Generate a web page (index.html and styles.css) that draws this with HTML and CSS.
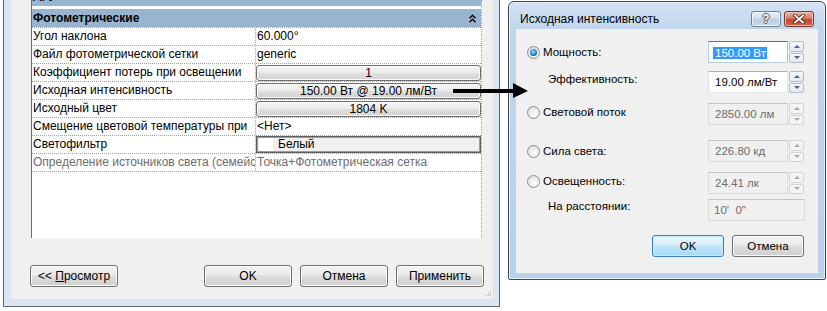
FILE: index.html
```html
<!DOCTYPE html>
<html lang="ru">
<head>
<meta charset="utf-8">
<title>Исходная интенсивность</title>
<link rel="stylesheet" href="styles.css">
</head>
<body>
<div class="desk">
  <div class="win">
    <div class="client">
      <div class="grid">
        <div class="cat cat-cut"><span>Другие</span></div>
        <div class="cat"><span>Фотометрические</span>
          <svg class="chev" width="7" height="9" viewBox="0 0 7 9"><polyline points="0.5,4.2 3.5,1.2 6.5,4.2" fill="none" stroke="#000" stroke-width="1.4"/><polyline points="0.5,8.2 3.5,5.2 6.5,8.2" fill="none" stroke="#000" stroke-width="1.4"/></svg>
        </div>
        <div class="row"><div class="k">Угол наклона</div><div class="v">60.000°</div></div>
        <div class="row"><div class="k">Файл фотометрической сетки</div><div class="v">generic</div></div>
        <div class="row"><div class="k">Коэффициент потерь при освещении</div><div class="v"><div class="vbtn">1</div></div></div>
        <div class="row"><div class="k">Исходная интенсивность</div><div class="v"><div class="vbtn">150.00 Вт @ 19.00 лм/Вт</div></div></div>
        <div class="row"><div class="k">Исходный цвет</div><div class="v"><div class="vbtn">1804 K</div></div></div>
        <div class="row"><div class="k">Смещение цветовой температуры при</div><div class="v">&lt;Нет&gt;</div></div>
        <div class="row"><div class="k">Светофильтр</div><div class="v"><div class="swatchbox"><span class="swatch"></span><span>Белый</span></div></div></div>
        <div class="row dim"><div class="k">Определение источников света (семейс</div><div class="v">Точка+Фотометрическая сетка</div></div>
      </div>
      <div class="btnbar">
        <div class="btn">&lt;&lt; <u>П</u>росмотр</div>
        <div class="spacer"></div>
        <div class="btn">OK</div>
        <div class="btn">Отмена</div>
        <div class="btn">Применить</div>
      </div>
      <svg class="grip" width="6" height="6" viewBox="0 0 6 6" fill="#a9a9a9"><rect x="4" y="0" width="1" height="1"/><rect x="2" y="2" width="1" height="1"/><rect x="4" y="2" width="1" height="1"/><rect x="0" y="4" width="1" height="1"/><rect x="2" y="4" width="1" height="1"/><rect x="4" y="4" width="1" height="1"/></svg>
    </div>
  </div>

  <div class="dlg">
    <div class="title">
      <span class="ttext">Исходная интенсивность</span>
      <div class="capbtns">
        <div class="cap help"><span>?</span></div>
        <div class="cap close">
          <svg width="12" height="10" viewBox="0 0 12 10"><path d="M2 1.5 L10 8.5 M10 1.5 L2 8.5" stroke="#5a2a22" stroke-width="3.6" stroke-linecap="square"/><path d="M2 1.5 L10 8.5 M10 1.5 L2 8.5" stroke="#fff" stroke-width="1.8" stroke-linecap="square"/></svg>
        </div>
      </div>
    </div>
    <div class="dclient">
      <div class="drow r1">
        <div class="opt"><span class="radio on"></span><span>Мощность:</span></div>
        <div class="ctl"><div class="field focus"><span class="sel">150.00 Вт</span></div><div class="spin"><span class="sb"><i class="up"></i></span><span class="sb"><i class="dn"></i></span></div></div>
      </div>
      <div class="drow r2">
        <div class="opt ind lift3">Эффективность:</div>
        <div class="ctl"><div class="field">19.00 лм/Вт</div><div class="spin"><span class="sb"><i class="up"></i></span><span class="sb"><i class="dn"></i></span></div></div>
      </div>
      <div class="drow r3">
        <div class="opt lift2"><span class="radio"></span><span>Световой поток</span></div>
        <div class="ctl"><div class="field off">2850.00 лм</div><div class="spin off"><span class="sb"><i class="up"></i></span><span class="sb"><i class="dn"></i></span></div></div>
      </div>
      <div class="drow r4">
        <div class="opt"><span class="radio"></span><span>Сила света:</span></div>
        <div class="ctl"><div class="field off">226.80 кд</div><div class="spin off"><span class="sb"><i class="up"></i></span><span class="sb"><i class="dn"></i></span></div></div>
      </div>
      <div class="drow r5">
        <div class="opt lift2"><span class="radio"></span><span>Освещенность:</span></div>
        <div class="ctl"><div class="field off">24.41 лк</div><div class="spin off"><span class="sb"><i class="up"></i></span><span class="sb"><i class="dn"></i></span></div></div>
      </div>
      <div class="drow r6">
        <div class="opt ind lift4">На расстоянии:</div>
        <div class="ctl"><div class="field off wide">10'&nbsp; 0"</div></div>
      </div>
      <div class="dbtns">
        <div class="btn dbtn def">OK</div>
        <div class="btn dbtn">Отмена</div>
      </div>
    </div>
  </div>

  <svg class="arrow" width="78" height="18" viewBox="0 0 78 18"><rect x="1" y="7" width="62" height="4" fill="#000"/><polygon points="61,1 76,9 61,16" fill="#000"/></svg>
</div>
</body>
</html>
```
FILE: styles.css
```css
* { box-sizing: border-box; }
html, body { margin: 0; padding: 0; background: #fff; }
body {
  width: 827px;
  height: 311px;
  overflow: hidden;
  font-family: "Liberation Sans", Arial, sans-serif;
  font-size: 12px;
  color: #000;
}
.desk {
  position: relative;
  display: flex;
  align-items: flex-start;
  padding-left: 3px;
  height: 311px;
}

/* ---------- left properties window ---------- */
.win {
  width: 497px;
  height: 307px;
  border: 1px solid #646464;
  border-top: 0;
  background: #dbe5f1;
  padding: 0 6px 7px 7px;
  flex: none;
}
.client {
  position: relative;
  height: 299px;
  background: #f0f0f0;
  display: flex;
  flex-direction: column;
}
.grid {
  margin-left: 20px;
  width: 451px;
  height: 238px;
  background: #fff;
  border-left: 1px solid #6d6d6d;
  border-right: 1px dotted #9a9a9a;
  overflow: hidden;
  flex: none;
}
.cat {
  height: 18px;
  background: #99b4d1;
  display: flex;
  align-items: center;
  justify-content: space-between;
  padding: 0 5px 0 1px;
  font-weight: bold;
  line-height: 18px;
}
.cat-cut { margin-top: -12px; margin-bottom: 3px; padding-bottom: 5px; line-height: 13px; }
.chev { display: block; }
.row {
  height: 18px;
  display: flex;
  border-top: 1px dotted #a0a0a0;
}
.row:last-child { height: 19px; border-bottom: 1px dotted #a0a0a0; }
.k {
  width: 224px;
  flex: none;
  border-right: 1px dotted #a0a0a0;
  padding-left: 1px;
  line-height: 17px;
  white-space: nowrap;
  overflow: hidden;
}
.v {
  flex: 1;
  padding-left: 1px;
  line-height: 17px;
  white-space: nowrap;
  overflow: hidden;
}
.row .v:has(.vbtn), .row .v:has(.swatchbox) { padding-left: 0; }
.dim .k, .dim .v { color: #6d6d6d; }
.vbtn {
  margin-top: 1px;
  height: 16px;
  border: 1px solid #6f6f6f;
  border-radius: 3px;
  background: linear-gradient(#f4f4f4, #ececec 45%, #dedede 55%, #d2d2d2);
  box-shadow: inset 0 0 0 1px #fafafa;
  text-align: center;
  line-height: 14px;
}
.swatchbox {
  height: 17px;
  border: 1px solid #5e5e5e;
  box-shadow: inset 0 0 0 1px #9c9c9c;
  background: #f0f0f0;
  display: flex;
  align-items: center;
  gap: 5px;
  padding: 2px;
  line-height: 13px;
}
.swatch { width: 14px; height: 13px; background: #fff; }

.btnbar {
  margin-top: 27px;
  height: 22px;
  display: flex;
  gap: 8px;
  padding: 0 9px 0 19px;
}
.spacer { flex: 1; }
.btn {
  width: 88px;
  height: 22px;
  border: 1px solid #707070;
  border-radius: 3px;
  background: linear-gradient(#f2f2f2, #ebebeb 45%, #dddddd 50%, #cfcfcf);
  box-shadow: inset 0 0 0 1px #fbfbfb;
  text-align: center;
  line-height: 20px;
  font-size: 12px;
}
.grip { position: absolute; right: 1px; bottom: 2px; }

/* ---------- dialog ---------- */
.dlg {
  margin-left: 8px;
  margin-top: 1px;
  width: 318px;
  height: 279px;
  flex: none;
  border: 1px solid #3b4657;
  border-radius: 6px 6px 2px 2px;
  background: linear-gradient(#d5e3f3, #bfd5ec 28px, #b9d1ea);
  box-shadow: inset 0 0 0 1px #e4edf8;
  padding: 0 7px 6px 7px;
  display: flex;
  flex-direction: column;
}
.title {
  height: 27px;
  display: flex;
  align-items: flex-start;
  justify-content: space-between;
  padding-left: 4px;
  flex: none;
}
.ttext { margin-top: 10px; line-height: 14px; font-size: 12px; }
.capbtns { display: flex; gap: 3px; margin-top: 9px; margin-right: 4px; }
.cap {
  width: 30px;
  height: 16px;
  border-radius: 3px;
  display: flex;
  align-items: center;
  justify-content: center;
}
.help {
  border: 1px solid #6e7f96;
  background: linear-gradient(#e6eef8, #d3e0ef 45%, #b9cbe1 50%, #c8d9ec);
  box-shadow: inset 0 0 0 1px #eef4fb;
}
.help span {
  color: #fff;
  font-weight: bold;
  font-size: 12px;
  line-height: 12px;
  text-shadow: 1px 0 0 #4c5566, -1px 0 0 #4c5566, 0 1px 0 #4c5566, 0 -1px 0 #4c5566;
}
.close {
  border: 1px solid #7a3428;
  background: linear-gradient(#eab2a4, #d9806c 45%, #c4452e 50%, #d2634c);
  box-shadow: inset 0 0 0 1px #f0c6bb;
}
.close svg { display: block; }
.dclient {
  flex: 1;
  background: #f0f0f0;
  font-size: 11.5px;
  padding-top: 12px;
}
.drow {
  display: flex;
  align-items: center;
  height: 22px;
  padding: 0 14px 0 11px;
}
.r2 { margin-top: 8px; }
.r3 { margin-top: 10px; }
.r4 { margin-top: 15px; }
.r5 { margin-top: 10px; }
.r6 { margin-top: 5px; padding-right: 13px; }
.opt { flex: 1; display: flex; align-items: center; gap: 3px; white-space: nowrap; }
.opt.ind { padding-left: 21px; }
.lift2 { margin-bottom: 4px; }
.lift3 { margin-bottom: 6px; }
.lift4 { margin-bottom: 8px; }
.radio {
  width: 13px;
  height: 13px;
  border-radius: 50%;
  border: 1px solid #8b8d8f;
  background: radial-gradient(circle at 60% 65%, #fdfdfd 0, #eeeeee 45%, #d2d2d2 100%);
  display: flex;
  align-items: center;
  justify-content: center;
  flex: none;
}
.radio.on::after {
  content: "";
  width: 7px;
  height: 7px;
  border-radius: 50%;
  background: radial-gradient(circle at 45% 40%, #b8ecff 0, #3fa4e8 35%, #1b4f93 75%, #173a6b 100%);
}
.ctl { display: flex; }
.field {
  width: 80px;
  height: 22px;
  border: 1px solid;
  border-color: #abadb3 #e2e3ea #e3e9ef #dbdfe6;
  background: #fff;
  padding-left: 6px;
  font-size: 11.5px;
  line-height: 20px;
  white-space: nowrap;
  overflow: hidden;
}
.field.focus { border-color: #3d7bad #a4c9e3 #b5cfe7 #b5cfe7; padding-left: 4px; }
.sel {
  display: inline-block;
  background: #3399ff;
  color: #fff;
  padding: 0 1px 0 2px;
  line-height: 12px;
  vertical-align: middle;
}
.field.off { background: #f0f0f0; border-color: #c3c3c3 #dadada #dadada #dadada; color: #6d6d6d; }
.field.wide { width: 97px; padding-left: 5px; }
.spin {
  margin-left: 1px;
  width: 15px;
  height: 22px;
  display: flex;
  flex-direction: column;
  gap: 1px;
}
.sb {
  flex: 1;
  border: 1px solid #b5bcc7;
  border-radius: 2px;
  background: linear-gradient(#f6f8fb, #e2e8f0);
  display: flex;
  align-items: center;
  justify-content: center;
}
.sb i { width: 0; height: 0; border-left: 3px solid transparent; border-right: 3px solid transparent; }
.sb .up { border-bottom: 3px solid #4d5f7a; }
.sb .dn { border-top: 3px solid #4d5f7a; }
.spin.off .sb { border-color: #d3d3d3; background: #f4f4f4; }
.spin.off .up { border-bottom-color: #a8a8a8; }
.spin.off .dn { border-top-color: #a8a8a8; }
.dbtns {
  margin-top: 14px;
  display: flex;
  justify-content: flex-end;
  gap: 8px;
  padding-right: 14px;
}
.dbtn { width: 72px; font-size: 11.5px; }
.dbtn.def {
  border-color: #3c7fb1;
  background: linear-gradient(#eaf6fd, #d9f0fc 45%, #bee6fd 50%, #a7d9f5);
  box-shadow: inset 0 0 0 1px #c9ebfb;
}

.arrow { position: absolute; left: 452px; top: 82px; }
```
